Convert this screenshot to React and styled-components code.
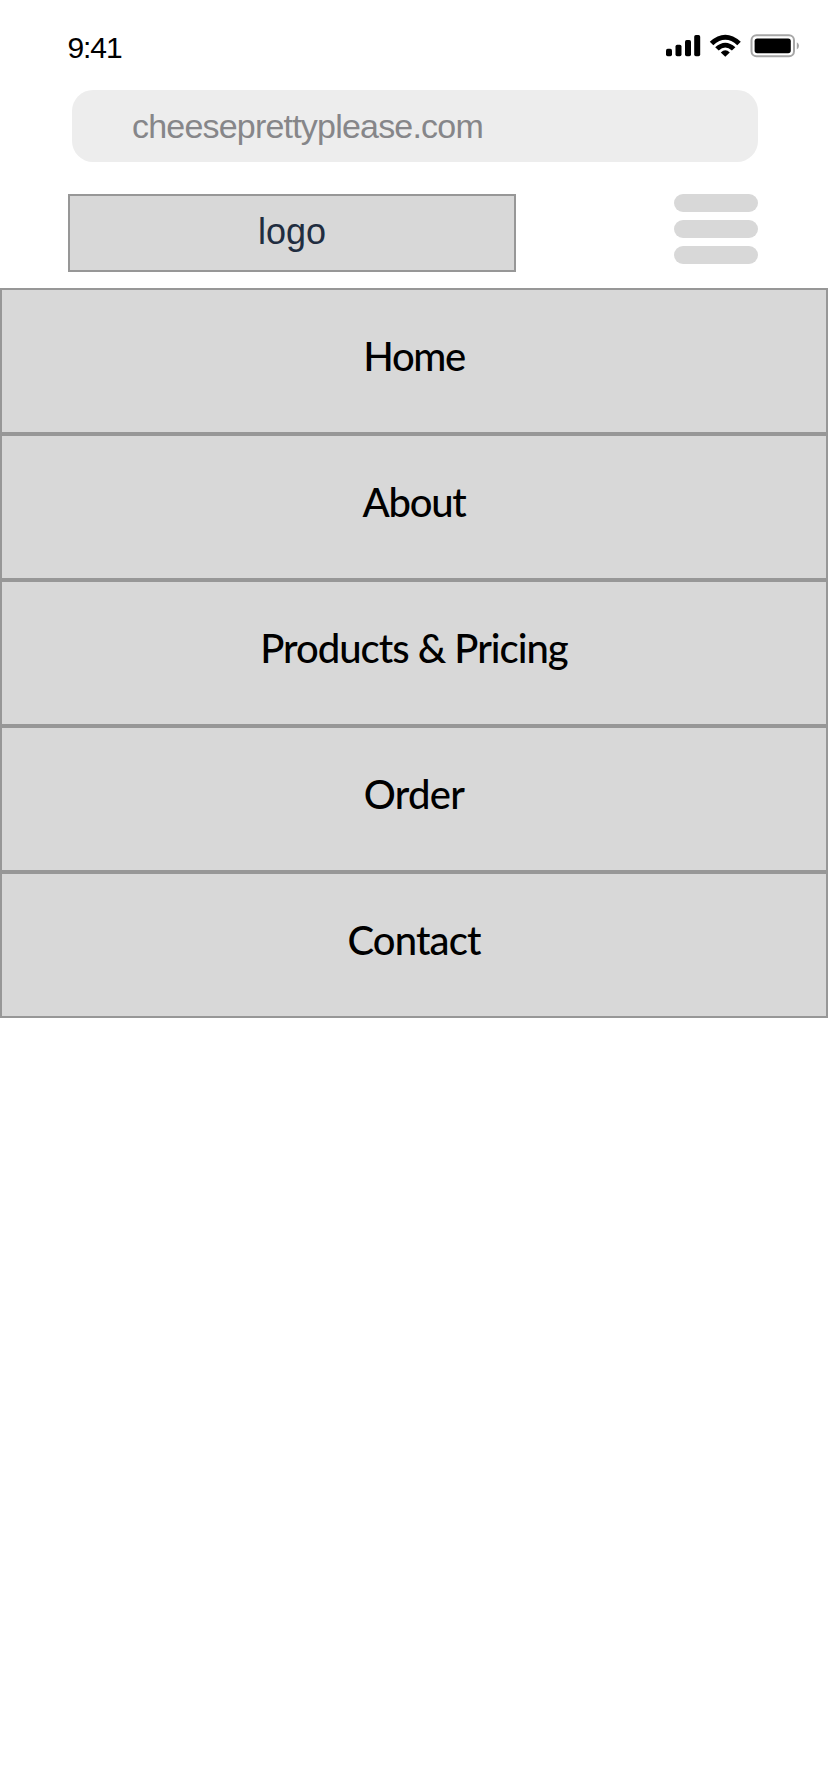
import React from "react";
import styled, { createGlobalStyle } from "styled-components";

const GlobalStyle = createGlobalStyle`
  *, *::before, *::after { box-sizing: border-box; }
  body { margin: 0; background: #fff; }
`;

const Screen = styled.div`
  width: 828px;
  min-height: 1792px;
  background: #fff;
  font-family: "Liberation Sans", Arial, sans-serif;
`;

const StatusBar = styled.header`
  display: flex;
  justify-content: space-between;
  height: 90px;
  padding: 30px 28px 0 67.5px;
`;

const Time = styled.time`
  font-size: 30px;
  line-height: 35px;
  letter-spacing: -1.1px;
  color: #000;
`;

const StatusIcons = styled.svg`
  display: block;
  width: 135px;
  height: 30px;
`;

const AddressBar = styled.div`
  height: 72px;
  margin: 0 70px 0 72px;
  padding-left: 60px;
  border-radius: 21px;
  background: #ededed;
  color: #868689;
  font-size: 34px;
  line-height: 73px;
  letter-spacing: -0.8px;
  white-space: nowrap;
`;

const SiteHeader = styled.div`
  display: flex;
  justify-content: space-between;
  height: 126px;
  padding: 32px 70px 0 68px;
`;

const Logo = styled.div`
  width: 448px;
  height: 78px;
  border: 2px solid #979797;
  background: #d8d8d8;
  color: #212d40;
  font-size: 36px;
  line-height: 72px;
  text-align: center;
`;

const MenuButton = styled.button`
  display: flex;
  flex-direction: column;
  gap: 8px;
  width: 84px;
  height: 70px;
  padding: 0;
  border: 0;
  background: none;
`;

const MenuLine = styled.span`
  width: 84px;
  height: 18px;
  border-radius: 9px;
  background: #d8d8d8;
`;

const Nav = styled.nav`
  display: flex;
  flex-direction: column;
`;

const NavItem = styled.a`
  height: 146px;
  padding-top: 41px;
  border: 2px solid #979797;
  background: #d8d8d8;
  color: #000;
  font-family: Lato, sans-serif;
  font-size: 40px;
  font-weight: 500;
  line-height: 50px;
  letter-spacing: ${(p) => p.$spacing}px;
  text-align: center;
  text-decoration: none;
`;

const items = [
  { label: "Home", spacing: -1.4 },
  { label: "About", spacing: -1.3 },
  { label: "Products & Pricing", spacing: -1 },
  { label: "Order", spacing: -0.7 },
  { label: "Contact", spacing: -0.85 },
];

export default function App() {
  return (
    <Screen>
      <GlobalStyle />
      <StatusBar>
        <Time>9:41</Time>
        <StatusIcons viewBox="665 30 135 30" aria-hidden="true">
          <rect x="666" y="48.7" width="6" height="7.6" rx="1.7" />
          <rect x="675.5" y="44.7" width="6" height="11.6" rx="1.7" />
          <rect x="685" y="40" width="6" height="16.3" rx="1.7" />
          <rect x="694.2" y="35" width="6" height="21.3" rx="1.7" />
          <path d="M709.8 41.8 Q725.3 27.8 740.8 41.8 L737.3 45.2 Q725.3 34.4 713.3 45.2Z" />
          <path d="M715.2 47.3 Q725.3 38 735.4 47.3 L731.9 50.6 Q725.3 44.4 718.7 50.6Z" />
          <path d="M720.8 52.4 Q725.3 48.2 729.8 52.4 L725.3 56.7Z" />
          <rect x="751.5" y="35.2" width="42.5" height="21" rx="5" fill="none" stroke="#a6a6a6" strokeWidth="2" />
          <rect x="754.6" y="38.6" width="36.2" height="14.6" rx="2.6" />
          <path d="M796.8 42.2 Q799 43.3 799 45.8 Q799 48.3 796.8 49.4Z" fill="#a6a6a6" />
        </StatusIcons>
      </StatusBar>
      <AddressBar>cheeseprettyplease.com</AddressBar>
      <SiteHeader>
        <Logo>logo</Logo>
        <MenuButton aria-label="Menu">
          <MenuLine />
          <MenuLine />
          <MenuLine />
        </MenuButton>
      </SiteHeader>
      <Nav>
        {items.map((item) => (
          <NavItem key={item.label} $spacing={item.spacing}>
            {item.label}
          </NavItem>
        ))}
      </Nav>
    </Screen>
  );
}
